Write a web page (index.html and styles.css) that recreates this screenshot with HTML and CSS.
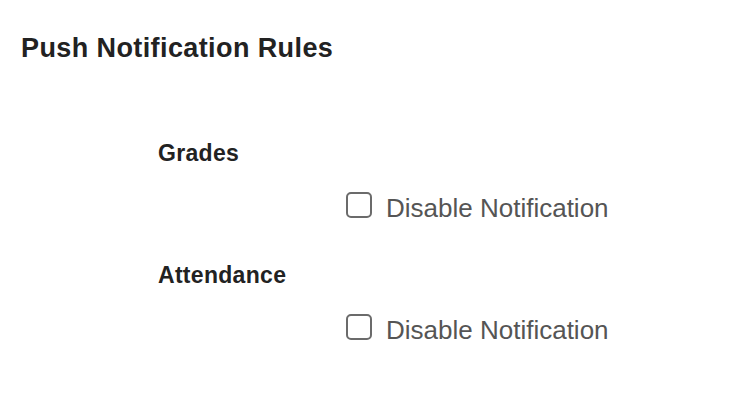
FILE: index.html
```html
<!DOCTYPE html>
<html lang="en">
<head>
    <meta charset="UTF-8">
    <meta name="viewport" content="width=device-width, initial-scale=1.0">
    <title>Push Notification Rules</title>
    <link rel="stylesheet" href="styles.css">
</head>
<body>
    <div class="rules-page">
        <h1 class="rules-title">Push Notification Rules</h1>

        <div class="rule-list">
            <div class="rule-group">
                <h2 class="rule-name">Grades</h2>
                <label class="rule-option">
                    <input type="checkbox" class="rule-check" />
                    <span>Disable Notification</span>
                </label>
            </div>
            <div class="rule-group">
                <h2 class="rule-name">Attendance</h2>
                <label class="rule-option">
                    <input type="checkbox" class="rule-check" />
                    <span>Disable Notification</span>
                </label>
            </div>
        </div>
    </div>
</body>
</html>
```

FILE: styles.css
```css
body {
    margin: 0;
    padding: 0;
    background-color: #ffffff;
    font-family: "Liberation Sans", Arial, sans-serif;
    color: #222222;
}
.rules-page {
    padding-top: 33px;
}
.rules-title {
    margin: 0;
    padding-left: 21px;
    font-size: 27px;
    line-height: 30px;
    font-weight: bold;
    letter-spacing: 0.4px;
    color: #222222;
}
.rule-list {
    padding-left: 158px;
    padding-top: 77px;
}
.rule-group {
    margin-bottom: 39px;
}
.rule-name {
    margin: 0;
    font-size: 23px;
    line-height: 26px;
    font-weight: bold;
    letter-spacing: 0.3px;
    color: #222222;
}
.rule-option {
    display: flex;
    align-items: center;
    margin-top: 27px;
    padding-left: 188px;
    font-size: 26px;
    line-height: 30px;
    color: #555555;
    cursor: pointer;
}
.rule-check {
    appearance: none;
    -webkit-appearance: none;
    margin: 0 14px 0 0;
    width: 26px;
    height: 26px;
    border: 2px solid #6b6b6b;
    border-radius: 5px;
    background-color: #ffffff;
    position: relative;
    top: -3px;
}
```
